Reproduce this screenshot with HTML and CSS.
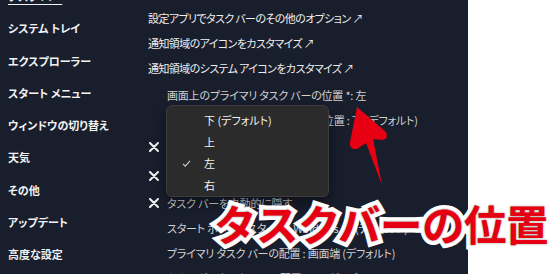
FILE: index.html
```html
<!DOCTYPE html>
<html lang="ja">
<head>
<meta charset="utf-8">
<link rel="stylesheet" href="styles.css">
</head>
<body>
<div class="page">
  <div class="panel">
    <nav class="sidebar">
      <div class="nav-item underline">タスク バー</div>
      <div class="nav-item">システム トレイ</div>
      <div class="nav-item">エクスプローラー</div>
      <div class="nav-item">スタート メニュー</div>
      <div class="nav-item">ウィンドウの切り替え</div>
      <div class="nav-item">天気</div>
      <div class="nav-item">その他</div>
      <div class="nav-item">アップデート</div>
      <div class="nav-item">高度な設定</div>
    </nav>
    <main class="content">
      <div class="row link">設定アプリでタスク バーのその他のオプション ↗</div>
      <div class="row link">通知領域のアイコンをカスタマイズ ↗</div>
      <div class="row link gap-more">通知領域のシステム アイコンをカスタマイズ ↗</div>
      <div class="row setting">画面上のプライマリ タスク バーの位置 *: 左</div>
      <div class="row setting">画面上のセカンダリ タスク バーの位置 : 下 (デフォルト)</div>
      <div class="row check gap-more">
        <svg class="xmark" viewBox="0 0 10 10"><path d="M1 1L9 9M9 1L1 9"/></svg>
        <span class="setting">タスク バーを結合しない</span>
      </div>
      <div class="row check">
        <svg class="xmark" viewBox="0 0 10 10"><path d="M1 1L9 9M9 1L1 9"/></svg>
        <span class="setting">タスク バーを小さくする</span>
      </div>
      <div class="row check">
        <svg class="xmark" viewBox="0 0 10 10"><path d="M1 1L9 9M9 1L1 9"/></svg>
        <span class="setting">タスク バーを自動的に隠す</span>
      </div>
      <div class="row setting">スタート ボタンのスタイル : Windows 10 (デフォルト)</div>
      <div class="row setting">プライマリ タスク バーの配置 : 画面端 (デフォルト)</div>
      <div class="row setting">セカンダリ タスク バーの配置 : 画面端 (デフォルト)</div>
    </main>

    <div class="menu">
      <div class="menu-item"><span class="tick"></span>下 (デフォルト)</div>
      <div class="menu-item"><span class="tick"></span>上</div>
      <div class="menu-item"><span class="tick"><svg viewBox="0 0 10 8"><path d="M1 4.5L3.5 7L9 1"/></svg></span>左</div>
      <div class="menu-item"><span class="tick"></span>右</div>
    </div>

    <svg class="arrow" viewBox="340 100 60 90">
      <path d="M357 107 L386 132 Q389 139 382 140 L373 139 L382 185 L366 143 L357 149 Q349 150 350 142 Z"/>
    </svg>
  </div>
  <div class="caption">タスクバーの位置</div>
</div>
</body>
</html>
```

FILE: styles.css
```css
html, body {
  margin: 0;
  padding: 0;
  background: #ffffff;
}
body {
  width: 556px;
  height: 274px;
  overflow: hidden;
  font-family: "Noto Sans CJK JP", "Noto Sans", sans-serif;
  font-feature-settings: "palt";
}
.page {
  position: relative;
  display: flex;
  width: 556px;
  height: 274px;
  overflow: hidden;
}
.panel {
  position: relative;
  width: 468px;
  height: 274px;
  background: #191e2d;
  display: flex;
  overflow: hidden;
}
.sidebar {
  width: 148px;
  flex: none;
  display: flex;
  flex-direction: column;
  gap: 12.3px;
  margin-top: -14px;
  padding-left: 8px;
  box-sizing: border-box;
}
.nav-item {
  height: 20px;
  line-height: 20px;
  font-size: 11px;
  font-weight: 700;
  color: #f2f2f2;
  white-space: nowrap;
}
.nav-item.underline {
  text-decoration: underline;
  text-underline-offset: 3px;
}
.content {
  flex: 1;
  display: flex;
  flex-direction: column;
  gap: 5px;
  padding-top: 8px;
}
.row {
  height: 20px;
  line-height: 20px;
  font-size: 11px;
  letter-spacing: -0.2px;
  white-space: nowrap;
}
.row.gap-more {
  margin-bottom: 2px;
}
.link {
  color: #eeeeee;
  letter-spacing: -0.6px;
}
.row.setting {
  padding-left: 19px;
  color: #d2d2d2;
}
span.setting {
  color: #d2d2d2;
}
.check {
  display: flex;
  align-items: center;
  gap: 8px;
  margin-top: 2px;
}
.xmark {
  width: 10px;
  height: 10px;
  margin-left: 1px;
  fill: none;
  stroke: #f4f4f4;
  stroke-width: 2;
  stroke-linecap: round;
}
.menu {
  position: absolute;
  left: 166px;
  top: 105px;
  width: 163px;
  height: 92px;
  box-sizing: border-box;
  background: #2b2b2b;
  border: 1px solid #3c3c3c;
  border-radius: 6px;
  box-shadow: 0 6px 14px rgba(0, 0, 0, 0.45);
  padding-top: 4px;
  display: flex;
  flex-direction: column;
}
.menu-item {
  height: 21.5px;
  line-height: 21.5px;
  font-size: 11px;
  color: #f2f2f2;
  display: flex;
  align-items: center;
}
.tick {
  width: 37px;
  flex: none;
  display: flex;
  justify-content: flex-end;
  padding-right: 13px;
  box-sizing: border-box;
}
.tick svg {
  width: 9px;
  height: 7px;
  fill: none;
  stroke: #cfcfcf;
  stroke-width: 1.2;
}
.arrow {
  position: absolute;
  left: 340px;
  top: 100px;
  width: 60px;
  height: 90px;
  fill: #e60012;
}
.caption {
  position: absolute;
  left: 214px;
  top: 195px;
  font-size: 42.5px;
  line-height: 56px;
  font-weight: 700;
  color: #e60012;
  white-space: nowrap;
  letter-spacing: -0.5px;
  font-feature-settings: normal;
  -webkit-text-stroke: 9px #ffffff;
  paint-order: stroke fill;
  text-shadow: 0 0 2px rgba(120, 120, 120, 0.9);
}
```
